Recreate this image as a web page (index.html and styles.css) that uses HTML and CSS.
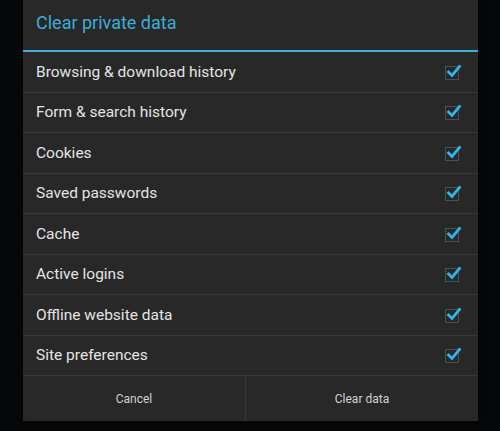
FILE: index.html
```html
<!DOCTYPE html>
<html lang="en">
<head>
  <meta charset="UTF-8">
  <title>Clear private data</title>
  <link rel="stylesheet" href="styles.css">
</head>
<body>
  <div class="dialog">
    <div class="dialog-title">Clear private data</div>

    <ul class="options">
      <li class="option"><span>Browsing &amp; download history</span><span class="check"></span></li>
      <li class="option"><span>Form &amp; search history</span><span class="check"></span></li>
      <li class="option"><span>Cookies</span><span class="check"></span></li>
      <li class="option"><span>Saved passwords</span><span class="check"></span></li>
      <li class="option"><span>Cache</span><span class="check"></span></li>
      <li class="option"><span>Active logins</span><span class="check"></span></li>
      <li class="option"><span>Offline website data</span><span class="check"></span></li>
      <li class="option"><span>Site preferences</span><span class="check"></span></li>
    </ul>

    <div class="buttons">
      <button class="btn btn-cancel">Cancel</button>
      <button class="btn">Clear data</button>
    </div>
  </div>

  <template id="tick">
    <svg width="20" height="18" viewBox="0 0 20 18">
      <path d="M4.5 9 L8 12.5 L15.5 3.5" fill="none" stroke="#33b5e5" stroke-width="2.8" stroke-linecap="square"/>
    </svg>
  </template>

  <script>
    // draw the check mark into every box
    const tick = document.getElementById("tick");
    document.querySelectorAll(".check").forEach(box => {
      box.appendChild(tick.content.cloneNode(true));
    });
  </script>
</body>
</html>
```

FILE: styles.css
```css
html, body {
  margin: 0;
  height: 100%;
}

body {
  background: #060708;
  font-family: Roboto, "Noto Sans", sans-serif;
  padding: 0 22px 0 23px;
}

.dialog {
  background: #282828;
  width: 455px;
  box-shadow: 0 0 4px rgba(0,0,0,0.6);
}

.dialog-title {
  height: 50px;
  line-height: 46px;
  padding-left: 13px;
  color: #3aaed6;
  font-size: 18px;
  border-bottom: 2px solid #3fb0d8;
}

.options {
  list-style: none;
  margin: 0;
  padding: 0;
}

.option {
  box-sizing: border-box;
  height: 40.5px;
  display: flex;
  align-items: center;
  justify-content: space-between;
  padding: 0 19px 0 13px;
  border-bottom: 1px solid #383838;
  color: #e4e4e4;
  font-size: 15.5px;
}

.check {
  position: relative;
  width: 12px;
  height: 12px;
  border: 1px solid #4a5054;
  background: #23292c;
  margin-top: 2px;
}

.check svg {
  position: absolute;
  left: -2px;
  top: -4px;
}

.buttons {
  display: flex;
  height: 45px;
}

.btn {
  flex: 1;
  background: none;
  border: none;
  color: #d2d2d2;
  font-family: Roboto, "Noto Sans", sans-serif;
  font-size: 12px;
  padding: 0;
}

.btn-cancel {
  flex: 0 0 222px;
}

.btn + .btn {
  border-left: 1px solid #383838;
}
```
